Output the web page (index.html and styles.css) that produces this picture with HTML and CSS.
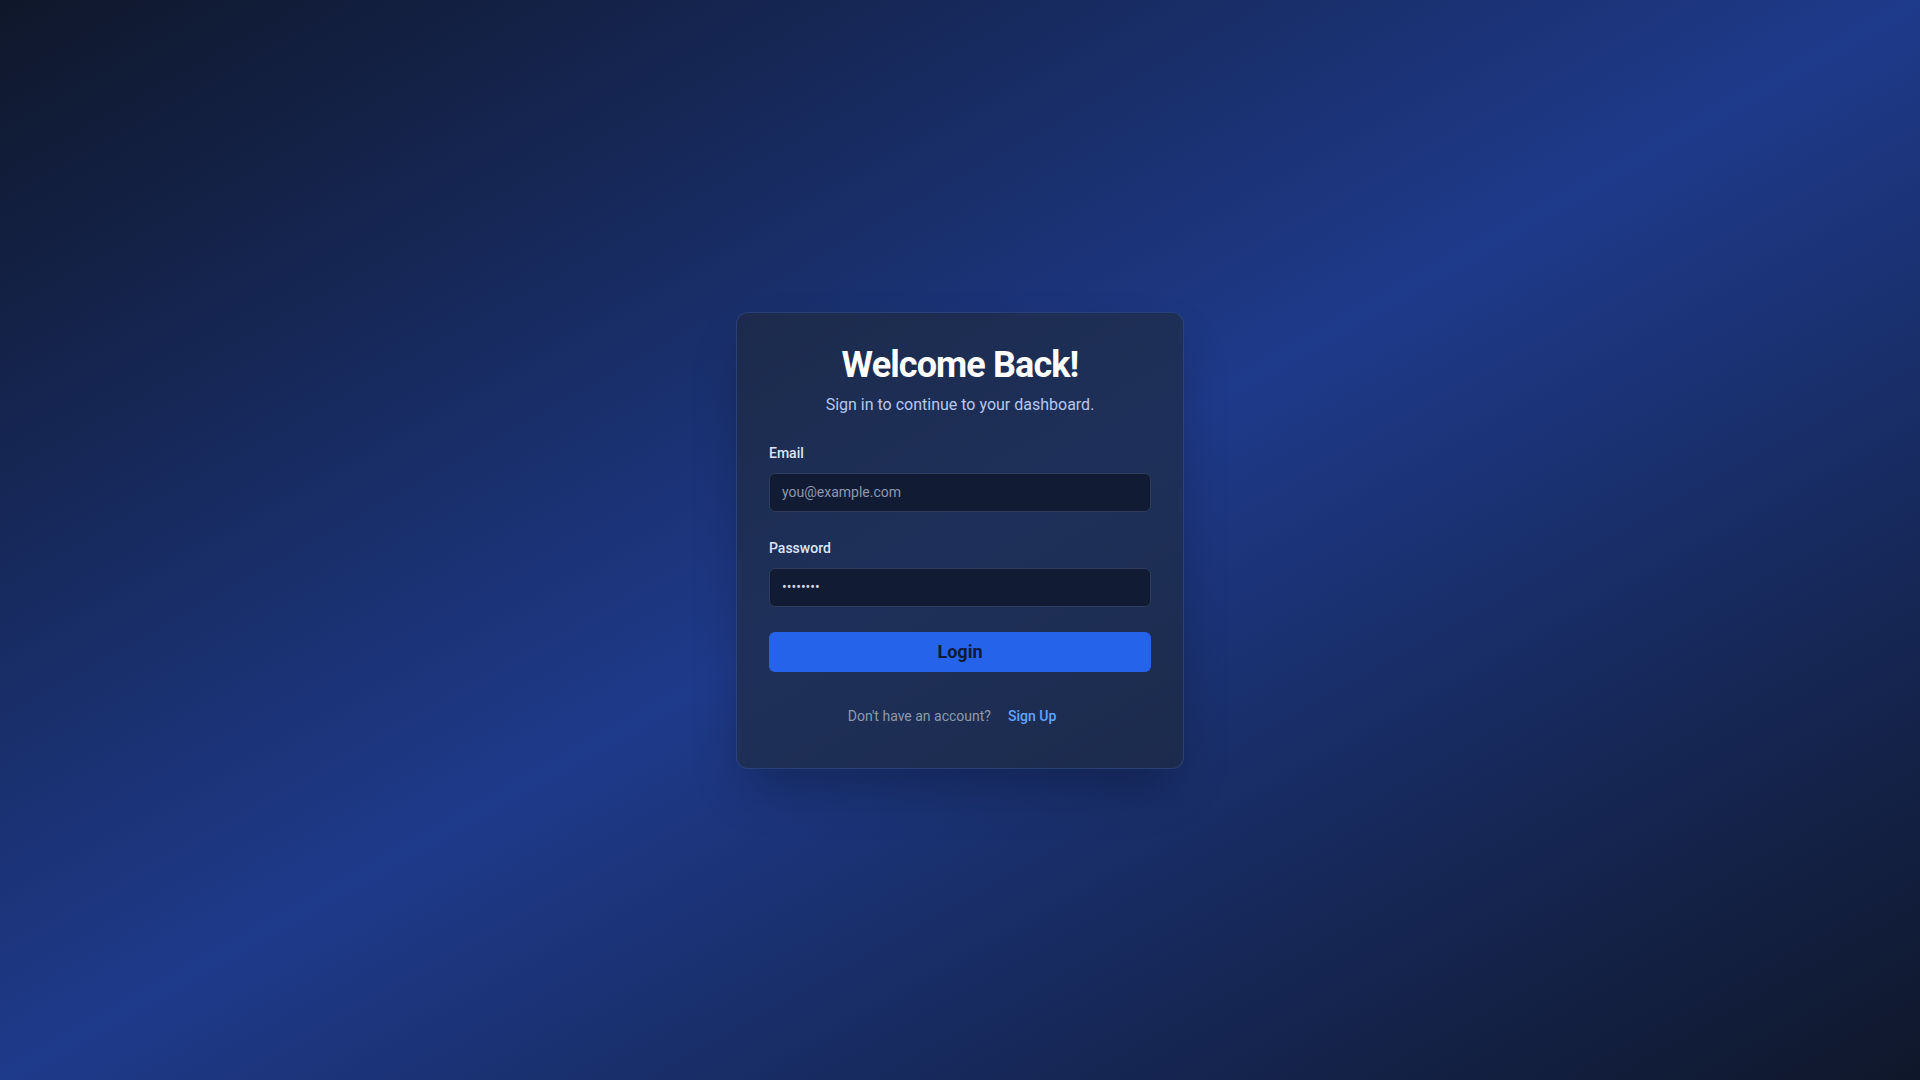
FILE: index.html
```html
<!DOCTYPE html>
<html lang="en">
<head>
<meta charset="utf-8">
<title>Login</title>
<link rel="stylesheet" href="styles.css">
</head>
<body>
  <main class="page">
    <section class="card">
      <header class="card-header">
        <h1 class="title">Welcome Back!</h1>
        <p class="subtitle">Sign in to continue to your dashboard.</p>
      </header>
      <form class="form">
        <div class="field">
          <label class="label" for="email">Email</label>
          <input class="input" id="email" type="email" placeholder="you@example.com">
        </div>
        <div class="field field-last">
          <label class="label" for="password">Password</label>
          <input class="input" id="password" type="password" value="password">
        </div>
        <button class="btn" type="button">Login</button>
      </form>
      <p class="footer">
        <span class="footer-text">Don't have an account?</span>
        <a class="footer-link" href="#">Sign Up</a>
      </p>
    </section>
  </main>
</body>
</html>
```

FILE: styles.css
```css
* {
  box-sizing: border-box;
}

html, body {
  margin: 0;
  padding: 0;
  height: 100%;
}

body {
  font-family: Roboto, "Liberation Sans", Arial, sans-serif;
  background: linear-gradient(to bottom right, #0f172a, #1e3a8a, #0f172a);
  color: #e5e7eb;
}

.page {
  min-height: 100vh;
  display: flex;
  align-items: center;
  justify-content: center;
}

.card {
  width: 448px;
  padding: 32px;
  border: 1px solid rgba(59, 90, 170, 0.45);
  border-radius: 12px;
  background: rgba(31, 41, 55, 0.58);
  box-shadow: 0 25px 50px -12px rgba(0, 0, 0, 0.3);
}

.card-header {
  text-align: center;
  margin-bottom: 26px;
}

.title {
  margin: 0;
  font-size: 36px;
  line-height: 40px;
  font-weight: 700;
  color: #ffffff;
  letter-spacing: -0.025em;
}

.subtitle {
  margin: 8px 0 0;
  font-size: 16px;
  line-height: 24px;
  color: #b6c8f0;
}

.form {
  display: flex;
  flex-direction: column;
}

.field {
  display: flex;
  flex-direction: column;
  margin-bottom: 26px;
}

.field-last {
  margin-bottom: 25px;
}

.label {
  font-size: 14px;
  line-height: 20px;
  font-weight: 500;
  color: #dde5f5;
  margin-bottom: 10px;
}

.input {
  height: 39px;
  padding: 0 12px;
  border: 1px solid #2f3b58;
  border-radius: 6px;
  background: #121b34;
  color: #cfd6e4;
  font-family: Roboto, "Liberation Sans", Arial, sans-serif;
  font-size: 14px;
  outline: none;
}

.input::placeholder {
  color: #8f99ad;
}

.btn {
  height: 40px;
  border: none;
  border-radius: 6px;
  background: #2563eb;
  color: #0f1a33;
  font-family: Roboto, "Liberation Sans", Arial, sans-serif;
  font-size: 18px;
  font-weight: 700;
  cursor: pointer;
}

.footer {
  margin: 34px 0 10px;
  padding-right: 16px;
  display: flex;
  justify-content: center;
  gap: 17px;
  font-size: 14px;
  line-height: 20px;
}

.footer-text {
  color: #8f99ad;
}

.footer-link {
  color: #60a5fa;
  font-weight: 500;
  text-decoration: none;
}
```
